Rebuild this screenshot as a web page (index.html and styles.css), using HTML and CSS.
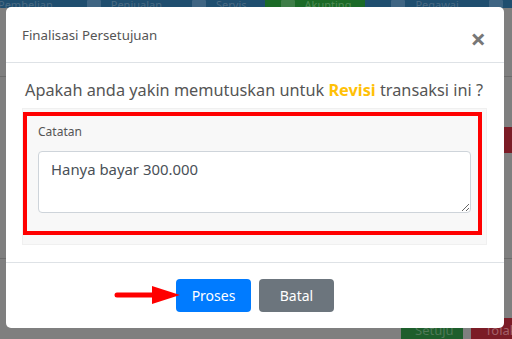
FILE: index.html
```html
<!DOCTYPE html>
<html lang="en">
    <head>
        <meta charset="UTF-8" />
        <title>Finalisasi Persetujuan</title>
        <link rel="stylesheet" href="styles.css">
    </head>
    <body>
        <div class="page">
            <div class="navbar">
                <span class="nav-item first">Pembelian</span>
                <span class="nav-item"><i class="nav-icon"></i>Penjualan</span>
                <span class="nav-item"><i class="nav-icon"></i>Servis</span>
                <span class="nav-item active"><i class="nav-icon"></i>Akunting</span>
                <span class="nav-item"><i class="nav-icon"></i>Pegawai</span>
                <span class="nav-item"><i class="nav-icon"></i>Admin</span>
            </div>
            <div class="row-line line1"></div>
            <div class="tag-red mid"></div>
            <div class="row-line line2"></div>
            <div class="actions">
                <span class="btn-bg green">Setuju</span>
                <span class="btn-bg red">Tolak</span>
            </div>
        </div>

        <div class="modal">
            <div class="modal-header">
                <h5 class="modal-title">Finalisasi Persetujuan</h5>
                <span class="close">&times;</span>
            </div>
            <div class="modal-body">
                <p class="question">Apakah anda yakin memutuskan untuk <b class="revisi">Revisi</b> transaksi ini ?</p>
                <div class="panel">
                    <label class="label">Catatan</label>
                    <textarea class="note">Hanya bayar 300.000</textarea>
                    <div class="mark"></div>
                </div>
            </div>
            <div class="modal-footer">
                <svg class="arrow" width="68" height="20" viewBox="0 0 68 20">
                    <line x1="3" y1="10" x2="42" y2="10" stroke="#ff0000" stroke-width="5" stroke-linecap="round"/>
                    <polygon points="38,1 66,10 38,19" fill="#ff0000"/>
                </svg>
                <button class="btn primary">Proses</button>
                <button class="btn secondary">Batal</button>
            </div>
        </div>
    </body>
</html>
```

FILE: styles.css
```css
body {
  margin: 0;
  width: 512px;
  height: 339px;
  overflow: hidden;
  background: #7f7f7f;
  font-family: "Noto Sans", "Open Sans", sans-serif;
}

.page {
  position: relative;
  height: 339px;
}

/* page behind the backdrop, darkened */
.navbar {
  display: flex;
  height: 8px;
  background: #1f4e6f;
  overflow: hidden;
}

.nav-item {
  display: flex;
  align-items: center;
  gap: 10px;
  height: 8px;
  font-size: 11px;
  color: #4a6b84;
  padding: 0 12px;
  margin-right: 6px;
  white-space: nowrap;
}

.nav-item.first {
  margin-left: -14px;
  margin-right: 10px;
}

.nav-icon {
  display: block;
  width: 14px;
  height: 8px;
  background: #3f6583;
  border-radius: 1px;
}

.nav-item.active {
  background: #1b6a27;
  color: #4e8a55;
  padding: 0 14px 0 16px;
  margin-right: 14px;
}

.nav-item.active .nav-icon {
  background: #3e7d47;
}

.row-line {
  position: absolute;
  left: 0;
  right: 0;
  height: 1px;
  background: #6c6c6c;
}

.line1 { top: 76px; }
.line2 { top: 258px; }

.tag-red {
  position: absolute;
  right: 0;
  width: 10px;
  background: #7b1c26;
}

.mid {
  top: 127px;
  height: 26px;
}

.actions {
  position: absolute;
  top: 318px;
  left: 401px;
  display: flex;
  gap: 8px;
}

.btn-bg {
  height: 21px;
  font-size: 13px;
  line-height: 24px;
  color: #4f7a58;
  padding: 0 14px;
}

.btn-bg.green { background: #1e5e2c; width: 34px; }
.btn-bg.red { background: #7b1c26; color: #a36068; }

.modal {
  position: absolute;
  top: 7px;
  left: 6px;
  width: 498px;
  height: 321px;
  background: #fff;
  border-radius: 5px;
  display: flex;
  flex-direction: column;
}

.modal-header {
  display: flex;
  align-items: center;
  justify-content: space-between;
  height: 55px;
  padding: 0 18px 0 16px;
  border-bottom: 1px solid #dee2e6;
}

.modal-title {
  margin: 0;
  font-size: 13.3px;
  font-weight: normal;
  color: #555;
}

.close {
  font-size: 27px;
  font-weight: bold;
  color: #777;
  line-height: 1;
  padding-top: 8px;
}

.modal-body {
  padding: 16px 17px 17px 16px;
  border-bottom: 1px solid #dee2e6;
}

.question {
  margin: 0 0 7px 3px;
  font-size: 16.3px;
  line-height: 22px;
  color: #555;
  white-space: nowrap;
}

.revisi {
  color: #ffc107;
}

.panel {
  position: relative;
  background: #f8f8f8;
  border: 1px solid #f0f0f0;
  padding: 14px 15px 31px 15px;
}

.label {
  display: block;
  font-size: 12px;
  color: #555;
  margin-bottom: 11px;
}

.note {
  display: block;
  box-sizing: border-box;
  width: 100%;
  height: 62px;
  border: 1px solid #ced4da;
  border-radius: 4px;
  padding: 7px 12px;
  font-family: "Noto Sans", "Open Sans", sans-serif;
  font-size: 14.9px;
  color: #495057;
  resize: vertical;
}

.mark {
  position: absolute;
  left: 0;
  top: 3px;
  width: 451px;
  height: 115px;
  border: 4px solid #ff0000;
}

.modal-footer {
  position: relative;
  flex: 1;
  display: flex;
  align-items: center;
  justify-content: center;
  gap: 8px;
  padding-bottom: 1px;
}

.btn {
  width: 75px;
  height: 33px;
  border: none;
  border-radius: 4px;
  color: #fff;
  font-family: "Noto Sans", "Open Sans", sans-serif;
  font-size: 14px;
}

.primary { background: #007bff; }
.secondary { background: #6c757d; }

.arrow {
  position: absolute;
  left: 108px;
  top: 22px;
}
```
